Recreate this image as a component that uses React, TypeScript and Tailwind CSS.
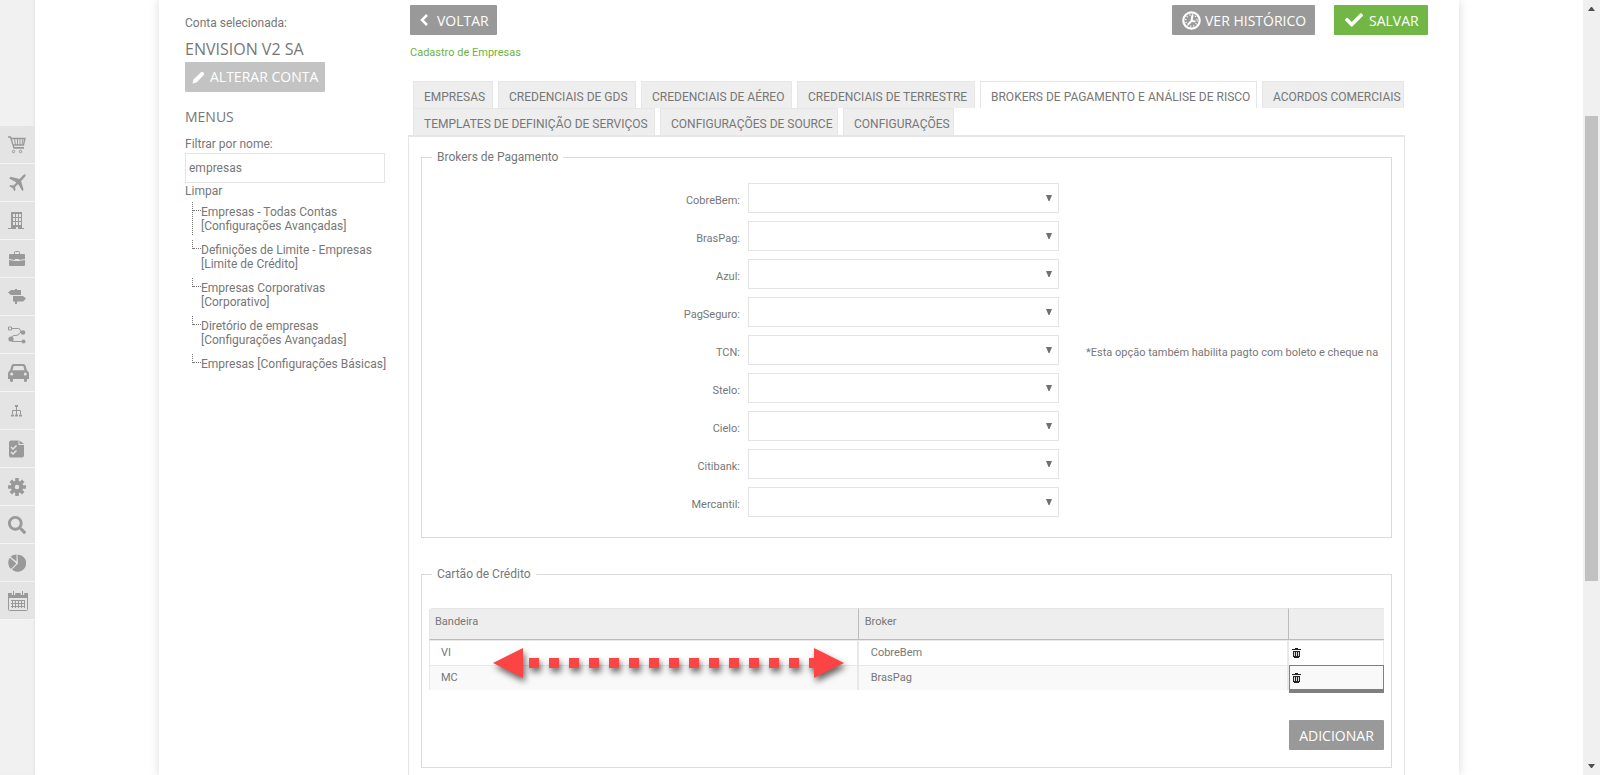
import React from "react";
import { FaCheck, FaSearch } from "react-icons/fa";

const brokers = ["CobreBem", "BrasPag", "Azul", "PagSeguro", "TCN", "Stelo", "Cielo", "Citibank", "Mercantil"];

const notes: Record<string, string> = {
  TCN: "*Esta opção também habilita pagto com boleto e cheque na",
};

const tabs = [
  { label: "EMPRESAS", width: "w-[80px]" },
  { label: "CREDENCIAIS DE GDS", width: "w-[138px]" },
  { label: "CREDENCIAIS DE AÉREO", width: "w-[151px]" },
  { label: "CREDENCIAIS DE TERRESTRE", width: "w-[178px]" },
  { label: "BROKERS DE PAGAMENTO E ANÁLISE DE RISCO", width: "w-[277px]" },
  { label: "ACORDOS COMERCIAIS", width: "w-[142px]" },
  { label: "TEMPLATES DE DEFINIÇÃO DE SERVIÇOS", width: "w-[242px]" },
  { label: "CONFIGURAÇÕES DE SOURCE", width: "w-[178px]" },
  { label: "CONFIGURAÇÕES", width: "w-[111px]" },
];
const activeTab = "BROKERS DE PAGAMENTO E ANÁLISE DE RISCO";

const menuLinks = [
  ["Empresas - Todas Contas", "[Configurações Avançadas]"],
  ["Definições de Limite - Empresas", "[Limite de Crédito]"],
  ["Empresas Corporativas", "[Corporativo]"],
  ["Diretório de empresas", "[Configurações Avançadas]"],
  ["Empresas [Configurações Básicas]"],
];

const cards = [
  { flag: "VI", broker: "CobreBem" },
  { flag: "MC", broker: "BrasPag" },
];

const CartIcon = () => (
  <svg width="18" height="18" viewBox="0 0 18 18" fill="none" stroke="currentColor">
    <path d="M0 1h2.500l3.500 11h10" strokeWidth="1.300" />
    <path d="M3 2.500h14l-1.500 6.500H5" strokeWidth="1.300" />
    <path d="M6.500 2.500l1 6.500M9.500 2.500v6.500M12 2.500v6.500M15 2.500l-1 6.500M5 11.500h11" />
    <circle cx="5.500" cy="15.500" r="1.200" />
    <circle cx="12.500" cy="15.500" r="1.200" />
  </svg>
);

const PlaneIcon = () => (
  <svg width="18" height="18" viewBox="0 0 18 18" fill="currentColor">
    <path d="M17.500.5c.6.8-.4 2.300-1.600 3.600l-2.800 2.800 2.500 8.800-1.300 1.300-4.200-7-3 3 .4 3.100-1.200 1.200-1.700-3.400-3.400-1.700 1.200-1.200 3.100.4 3-3-7.300-4L2.500 2.800l9.200 2.100L14.400 2.100C15.700.9 17-.1 17.500.5z" />
  </svg>
);

const BuildingIcon = () => (
  <svg width="17" height="18" viewBox="0 0 17 18" fill="currentColor" fillRule="evenodd">
    <path d="M3 0h11v16h2v1H0v-1h3zM5 2v3h2V2zM8 2v3h2V2zM11 2v3h2V2zM5 6v3h2V6zM8 6v3h2V6zM11 6v3h2V6zM5 10v3h2v-3zM8 10v3h2v-3zM11 10v3h2v-3zM8 15v2h2v-2z" />
  </svg>
);

const BriefcaseIcon = () => (
  <svg width="18" height="15" viewBox="0 0 18 15" fill="currentColor">
    <path d="M6.500 3V1.500q0-1 1-1h3q1 0 1 1V3" fill="none" stroke="currentColor" />
    <path d="M2 3h14a1 1 0 0 1 1 1v4l-6 1V8H7v1L1 8V4a1 1 0 0 1 1-1zM1 9l6 1h4l6-1v5a1 1 0 0 1-1 1H2a1 1 0 0 1-1-1z" />
  </svg>
);

const SignsIcon = () => (
  <svg width="18" height="16" viewBox="0 0 18 16" fill="currentColor">
    <path d="M7 0h2v1h4v5H3L0 3.500 3 1h4zM5 7h10l3 2.500-3 3H9V15H7v-2.500H5z" />
  </svg>
);

const RouteIcon = () => (
  <svg width="18" height="18" viewBox="0 0 18 18" fill="currentColor">
    <path d="M.5 1h3v3h-3zM4 2.500h6.500q2 0 2 3h2M13 6.500h-1q-1 3-4 3H6q-2 0-3 3M4 15.500h11" fill="none" stroke="currentColor" />
    <circle cx="15" cy="6.500" r="2.300" />
    <circle cx="3" cy="13" r="2.600" />
    <circle cx="15.500" cy="15.500" r="2" />
  </svg>
);

const CarIcon = () => (
  <svg width="21" height="18" viewBox="0 0 21 18" fill="currentColor" fillRule="evenodd">
    <path d="M5.500 0h10q1.500 0 2 1.500L19 6.500q2 1 2 3V15h-2v1.500a1.500 1.500 0 0 1-3 0V15H5v1.500a1.500 1.500 0 0 1-3 0V15H0V9.500q0-2 2-3l1.500-5Q4 0 5.500 0zM5.700 2L4.500 6.200h12L15.300 2zM3.700 8.500a1.500 1.500 0 1 0 0 3 1.500 1.500 0 0 0 0-3zM17.300 8.500a1.500 1.500 0 1 0 0 3 1.500 1.500 0 0 0 0-3z" />
  </svg>
);

const SitemapIcon = () => (
  <svg width="17" height="12" viewBox="0 0 17 12" fill="none" stroke="currentColor">
    <path d="M8.500 1v9M4.500 9V5.500h8V9" />
    <path d="M7 1h3M3 10.500h3M7 10.500h3M11 10.500h3" strokeWidth="2" />
  </svg>
);

const ChecklistIcon = () => (
  <svg width="17" height="18" viewBox="0 0 17 18" fill="currentColor">
    <path d="M3 .5h7.500V5H16v10.500a2 2 0 0 1-2 2H3a2 2 0 0 1-2-2v-13a2 2 0 0 1 2-2z" />
    <path d="M11.500.5L16 4h-4.500z" />
    <path d="M3 7l2 2 3.500-3.500M3 12l2 2 3.500-3.500" fill="none" stroke="#e4e4e4" strokeWidth="1.500" />
  </svg>
);

const GearIcon = () => (
  <svg width="18" height="18" viewBox="0 0 18 18" fill="none" stroke="currentColor">
    <circle cx="9" cy="9" r="4.200" strokeWidth="4" />
    <path d="M9 0v4M9 14v4M0 9h4M14 9h4M2.800 2.800l2.600 2.600M12.600 12.600l2.600 2.600M2.800 15.200l2.600-2.600M12.600 5.400l2.600-2.600" strokeWidth="3.600" />
  </svg>
);

const PieIcon = () => (
  <svg width="18" height="18" viewBox="0 0 18 18" fill="currentColor">
    <path d="M9.500.7a8.500 8.500 0 1 1-5.500 14.800L10 9.500z" />
    <path d="M8.500.5v7L2.500 2.800A8.500 8.500 0 0 1 8.500.5z" />
    <path d="M1.800 3.800L8.300 9.500 3 15A8.500 8.500 0 0 1 1.800 3.800z" />
  </svg>
);

const CalendarIcon = () => (
  <svg width="20" height="20" viewBox="0 0 20 20" fill="none" stroke="currentColor">
    <rect x=".5" y="2.500" width="19" height="17" rx="1" />
    <path d="M0 4.500h20" strokeWidth="5" />
    <path d="M5.500 0v4M14.500 0v4" stroke="#e4e4e4" strokeWidth="3.500" />
    <path d="M5.500 0v4M14.500 0v4M3 9.500h14M3 12.500h14M3 15.500h14M4.500 9v8M7.500 9v8M10.500 9v8M13.500 9v8M16.500 9v8" />
  </svg>
);

const ClockIcon = () => (
  <svg width="19" height="19" viewBox="0 0 19 19" fill="none" stroke="currentColor">
    <circle cx="9.500" cy="9.500" r="8.200" strokeWidth="2.200" />
    <circle cx="9.500" cy="9.500" r="5.700" strokeWidth="1.500" strokeDasharray="1 2" />
    <path d="M10.500 4l-1 6 4 .5M9.500 10L6 13.500" strokeWidth="2" />
  </svg>
);

const ChevronIcon = () => (
  <svg width="8" height="12" viewBox="0 0 8 12" fill="none" stroke="currentColor" strokeWidth="2.500">
    <path d="M7 1L2 6l5 5" />
  </svg>
);

const PencilIcon = () => (
  <svg width="13" height="13" viewBox="0 0 13 13" fill="currentColor">
    <path d="M.5 12.500l1-4L9 1.200q1-1 2 0l.8.800q1 1 0 2L4.500 11.500z" />
  </svg>
);

const TrashIcon = () => (
  <svg width="9" height="10" viewBox="0 0 9 10" fill="#222">
    <path d="M3 0h3v1h3v1H0V1h3zM1 3h7v6H7v1H2V9H1z" />
    <path d="M2.500 4v4M4.500 4v4M6.500 4v4" stroke="#ddd" />
  </svg>
);

const railItems = [
  { label: "Carrinho", icon: <CartIcon /> },
  { label: "Aéreo", icon: <PlaneIcon /> },
  { label: "Hotel", icon: <BuildingIcon /> },
  { label: "Pacotes", icon: <BriefcaseIcon /> },
  { label: "Destinos", icon: <SignsIcon /> },
  { label: "Rotas", icon: <RouteIcon /> },
  { label: "Carros", icon: <CarIcon /> },
  { label: "Estrutura", icon: <SitemapIcon /> },
  { label: "Tarefas", icon: <ChecklistIcon /> },
  { label: "Configurações", icon: <GearIcon /> },
  { label: "Busca", icon: <FaSearch className="w-[18px] h-[18px]" /> },
  { label: "Relatórios", icon: <PieIcon /> },
  { label: "Calendário", icon: <CalendarIcon /> },
];

const Rail = () => (
  <nav className="w-[35px] shrink-0 bg-[#f1f1f1] pt-[126px] shadow-[inset_-3px_0_3px_-2px_#e4e4e4]">
    {railItems.map((item) => (
      <a
        key={item.label}
        href="#"
        aria-label={item.label}
        className="flex h-[38px] items-center border-b border-[#f4f4f4] bg-[#e4e4e4] pl-2 text-[#999]"
      >
        {item.icon}
      </a>
    ))}
  </nav>
);

const Sidebar = () => (
  <aside className="w-[200px] shrink-0 pt-[15px] text-[12px] leading-[16px] font-['Roboto',sans-serif]">
    <p>Conta selecionada:</p>
    <h2 className="mt-2 font-['Open_Sans',sans-serif] text-[16px] leading-[20px]">ENVISION V2 SA</h2>
    <button className="mt-[3px] flex h-[30px] w-[140px] items-center gap-[5px] rounded-[1px] bg-[#c3c3c3] pl-[7px] font-['Open_Sans',sans-serif] text-[14px] text-white">
      <PencilIcon />
      ALTERAR CONTA
    </button>
    <h2 className="mt-[15px] font-['Open_Sans',sans-serif] text-[14px] leading-[20px]">MENUS</h2>
    <label htmlFor="menu-filter" className="mt-[9px] block">Filtrar por nome:</label>
    <input
      id="menu-filter"
      type="text"
      defaultValue="empresas"
      className="mt-px block h-[30px] w-full border border-[#e4e4e4] px-[3px] outline-none"
    />
    <a href="#" className="block">Limpar</a>
    <ul className="mt-[3px] ml-[7px]">
      {menuLinks.map((lines, idx) => (
        <li key={lines[0]} className="flex h-[38px]">
          <div className={idx === 0 ? "h-[33px] w-[9px] shrink-0 border-l border-dotted border-[#777]" : "h-[9px] w-[9px] shrink-0 border-l border-dotted border-[#777]"}>
            <div className="h-[9px] border-b border-dotted border-[#777]" />
          </div>
          <a href="#" className="pt-[3px] leading-[14px] whitespace-nowrap">
            {lines.map((line) => (
              <span key={line} className="block">{line}</span>
            ))}
          </a>
        </li>
      ))}
    </ul>
  </aside>
);

const Header = () => (
  <header>
    <div className="flex text-[14px] text-white">
      <button className="flex h-[30px] w-[87px] items-center gap-[9px] rounded-[1px] bg-[#999] pl-[10px]">
        <ChevronIcon />
        VOLTAR
      </button>
      <button className="ml-auto flex h-[30px] w-[143px] items-center gap-[4px] rounded-[1px] bg-[#999] pl-[10px]">
        <ClockIcon />
        VER HISTÓRICO
      </button>
      <button className="ml-[19px] flex h-[30px] w-[94px] items-center gap-[6px] rounded-[1px] bg-[#72b746] pl-[11px]">
        <FaCheck className="w-[18px] h-[18px]" />
        SALVAR
      </button>
    </div>
    <a href="#" className="mt-[9px] block font-['Roboto',sans-serif] text-[11px] leading-[18px] text-[#6cb33f]">Cadastro de Empresas</a>
  </header>
);

const BrokersForm = () => (
  <fieldset className="border border-[#dbdbdb] pb-[20px]">
    <legend className="ml-[10px] px-[5px] text-[12px] leading-[16px]">Brokers de Pagamento</legend>
    <div className="flex flex-col gap-2 pt-[18px] pr-[6px]">
      {brokers.map((broker) => (
        <div key={broker} className="grid grid-cols-[minmax(0,1fr)_311px_minmax(0,1fr)] text-[11px] leading-[30px]">
          <label htmlFor={broker} className="h-[30px] pt-[3px] pr-2 text-right">{broker}:</label>
          <div className="relative">
            <select id={broker} className="block h-[30px] w-full appearance-none border border-[#e4e4e4] bg-white px-2 outline-none">
              <option value=""></option>
            </select>
            <svg className="pointer-events-none absolute top-[12px] right-[7px]" width="6" height="6" viewBox="0 0 6 6" fill="#707070">
              <path d="M0 0h6L3.500 6h-1z" />
            </svg>
          </div>
          <span className="h-[30px] pt-[3px] pl-[27px] whitespace-nowrap">{notes[broker]}</span>
        </div>
      ))}
    </div>
  </fieldset>
);

// red double arrow drawn across the first column
const Arrow = () => (
  <svg
    className="pointer-events-none absolute top-[40px] left-[64px] drop-shadow-[2px_4px_3px_rgba(0,0,0,0.6)]"
    width="351"
    height="30"
    viewBox="0 0 351 30"
    fill="#fd4444"
  >
    <path d="M0 15L30 0v30zM351 15L321 0v30z" />
    <path d="M36 15h285" stroke="#fd4444" strokeWidth="10" strokeDasharray="10 10" />
    <path d="M316 10h6v10h-6z" />
  </svg>
);

const CardTable = () => (
  <fieldset className="mt-[28px] border border-[#dbdbdb] px-[7px] pb-[17px]">
    <legend className="ml-[3px] px-[5px] text-[12px] leading-[16px]">Cartão de Crédito</legend>
    <div className="relative pt-[26px]">
      <table className="w-full table-fixed border-separate border-spacing-0 text-left text-[11px] leading-[16px]">
        <thead>
          <tr className="h-[32px] bg-[#eee]">
            <th className="w-[45%] rounded-tl border-t border-r border-b border-l border-[#e6e6e6] border-r-[#bbb] border-b-[#bbb] px-[5px] pb-1 font-normal">Bandeira</th>
            <th className="w-[45%] border-t border-r border-b border-[#e6e6e6] border-r-[#bbb] border-b-[#bbb] px-[6px] pb-1 font-normal">Broker</th>
            <th className="w-[10%] border-t border-b border-[#e6e6e6] border-b-[#bbb]" aria-label="Ações" />
          </tr>
        </thead>
        <tbody>
          {cards.map((card, idx) => (
            <tr key={card.flag} className={idx % 2 ? "h-[25px] bg-[#f9f9f9]" : "h-[25px] bg-white"}>
              <td className="border-t border-r-2 border-l border-[#e8e8e8] px-[11px] pb-px">{card.flag}</td>
              <td className="border-t border-r-2 border-[#e8e8e8] px-[12px] pb-px">{card.broker}</td>
              <td className={idx === 1 ? "px-[3px] shadow-[inset_0_0_0_1px_#808080,0_3px_0_0_#808080]" : "border-t border-r border-[#e8e8e8] px-[3px]"}>
                <button aria-label={"Excluir " + card.flag} className="block">
                  <TrashIcon />
                </button>
              </td>
            </tr>
          ))}
        </tbody>
      </table>
      <div className="absolute top-[26px] left-0">
        <Arrow />
      </div>
    </div>
    <button className="mt-[30px] ml-auto block h-[30px] w-[95px] rounded-[1px] bg-[#999] font-['Open_Sans',sans-serif] text-[14px] text-white">ADICIONAR</button>
  </fieldset>
);

const Scrollbar = () => (
  <div className="flex w-[17px] shrink-0 flex-col items-center bg-[#f0f0f0] py-[7px]">
    <svg width="7" height="4" viewBox="0 0 7 4" fill="#505050">
      <path d="M3 0h1l3 4H0z" />
    </svg>
    <div className="grow-[105]" />
    <div className="w-[13px] grow-[465] bg-[#c1c1c1]" />
    <div className="grow-[183]" />
    <svg width="7" height="4" viewBox="0 0 7 4" fill="#505050">
      <path d="M0 0h7L4 4H3z" />
    </svg>
  </div>
);

const App = () => {
  return (
    <div className="flex min-h-screen bg-white font-['Open_Sans',sans-serif] text-[#777]">
      <Rail />
      <div className="flex grow justify-center">
        <div className="flex w-full max-w-[1300px] bg-white pl-[26px] shadow-[0_0_10px_rgba(0,0,0,0.15)]">
          <Sidebar />
          <main className="ml-[23px] flex min-w-0 grow flex-col pt-[5px]">
            <div className="mr-[31px] ml-[2px]">
              <Header />
            </div>
            <div className="mr-[54px] flex grow flex-col font-['Roboto',sans-serif]">
              <div role="tablist" className="mt-[19px] ml-[5px] flex flex-wrap gap-x-[5px]">
                {tabs.map(({ label, width }) => (
                  <button
                    key={label}
                    role="tab"
                    aria-selected={label === activeTab}
                    className={`h-[27px] border-x border-t border-[#e6e6e6] pt-1 pl-[10px] text-left text-[12px] whitespace-nowrap ${width} ${
                      label === activeTab ? "bg-white" : "bg-[#eee]"
                    }`}
                  >
                    {label}
                  </button>
                ))}
              </div>
              <section className="grow border-x border-t-2 border-[#e6e6e6] px-[12px] pt-[12px]">
                <BrokersForm />
                <CardTable />
              </section>
            </div>
          </main>
        </div>
      </div>
      <Scrollbar />
    </div>
  );
};

export default App;
